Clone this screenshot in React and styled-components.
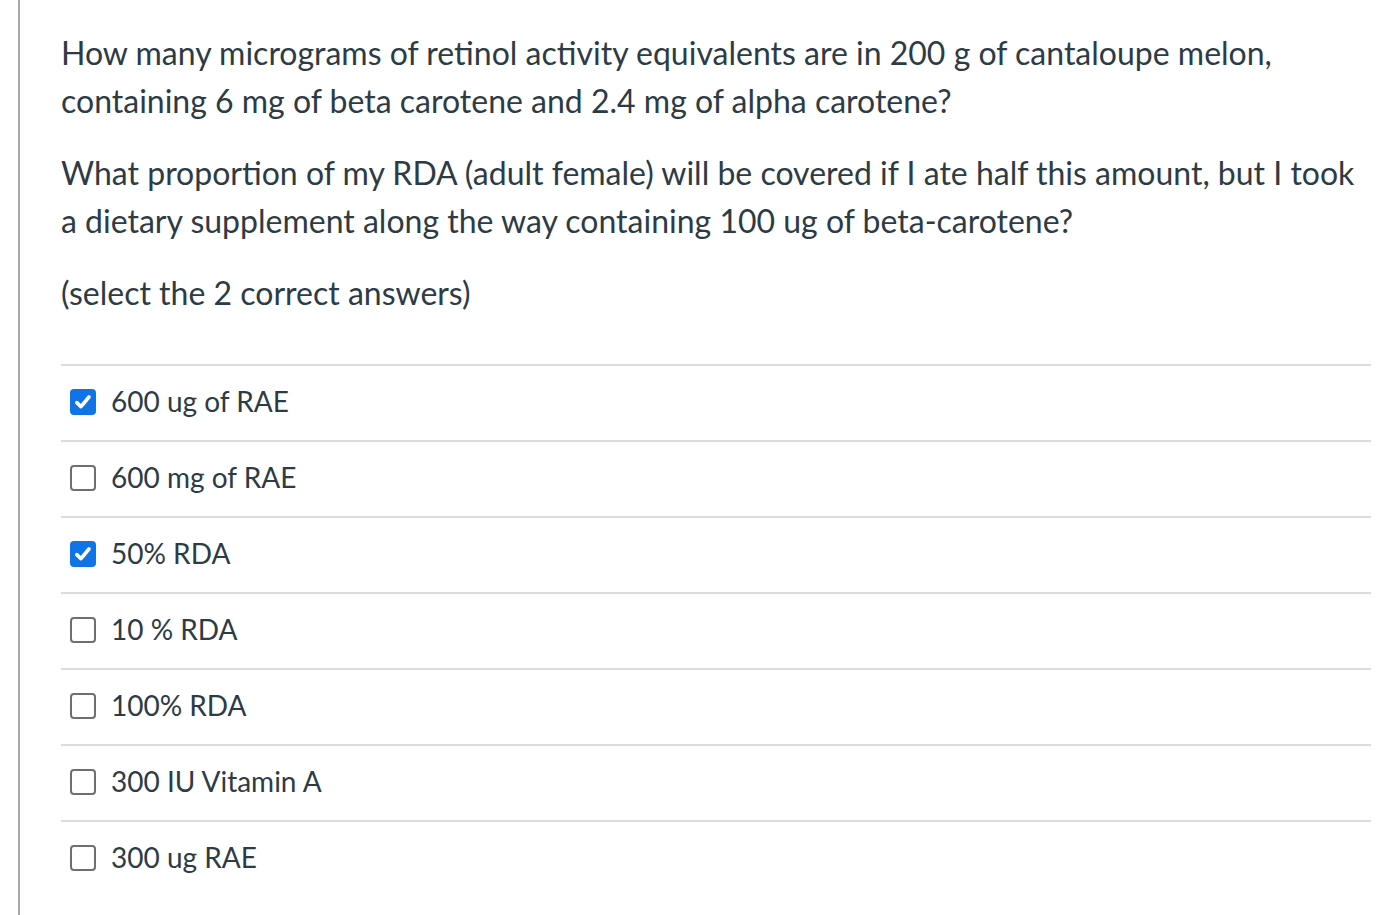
import styled, { createGlobalStyle } from "styled-components";

const GlobalStyle = createGlobalStyle`
    body {
        margin: 0;
        background: #ffffff;
        font-family: Lato, "Noto Sans", sans-serif;
        color: #2d3b45;
    }
`;

const Page = styled.div`
    min-height: 915px;
    padding-left: 18px;
    display: flex;
`;

const Panel = styled.div`
    border-left: 2px solid #a8a8a8;
    padding: 29px 8px 0 41px;
    width: 1310px;
    min-height: 886px;
`;

const Question = styled.p`
    margin: 0 0 24px 0;
    font-size: 32px;
    line-height: 48px;
`;

const Options = styled.div`
    margin-top: 47px;
    display: flex;
    flex-direction: column;
`;

const Option = styled.label`
    display: flex;
    align-items: center;
    gap: 15px;
    height: 74px;
    border-top: 2px solid #dcdcdc;
    padding-left: 9px;
    padding-bottom: 4px;
    box-sizing: border-box;
    height: 76px;
    font-size: 28px;
`;

const Box = styled.span`
    width: 26px;
    height: 26px;
    flex-shrink: 0;
    box-sizing: border-box;
    border-radius: 4px;
    display: flex;
    align-items: center;
    justify-content: center;
    background: ${(p) => (p.checked ? "#0f74e8" : "#ffffff")};
    border: 2px solid ${(p) => (p.checked ? "#0f74e8" : "#6f6f6f")};
    margin-top: 2px;
`;

const answers = [
    { label: "600 ug of RAE", checked: true },
    { label: "600 mg of RAE", checked: false },
    { label: "50% RDA", checked: true },
    { label: "10 % RDA", checked: false },
    { label: "100% RDA", checked: false },
    { label: "300 IU Vitamin A", checked: false },
    { label: "300 ug RAE", checked: false },
];

function Check({ checked }) {
    return (
        <Box checked={checked}>
            {checked && (
                <svg width="20" height="20" viewBox="0 0 20 20">
                    <path
                        d="M3.8 10.6 L8 14.6 L16 5"
                        fill="none"
                        stroke="#ffffff"
                        strokeWidth="3.6"
                        strokeLinecap="round"
                        strokeLinejoin="round"
                    />
                </svg>
            )}
        </Box>
    );
}

export default function App() {
    return (
        <>
            <GlobalStyle />
            <Page>
                <Panel>
                    <Question>
                        How many micrograms of retinol activity equivalents are in 200 g of cantaloupe melon,
                        containing 6 mg of beta carotene and 2.4 mg of alpha carotene?
                    </Question>
                    <Question>
                        What proportion of my RDA (adult female) will be covered if I ate half this amount, but I took
                        a dietary supplement along the way containing 100 ug of beta-carotene?
                    </Question>
                    <Question>(select the 2 correct answers)</Question>
                    <Options>
                        {answers.map((a) => (
                            <Option key={a.label}>
                                <Check checked={a.checked} />
                                <span>{a.label}</span>
                            </Option>
                        ))}
                    </Options>
                </Panel>
            </Page>
        </>
    );
}
